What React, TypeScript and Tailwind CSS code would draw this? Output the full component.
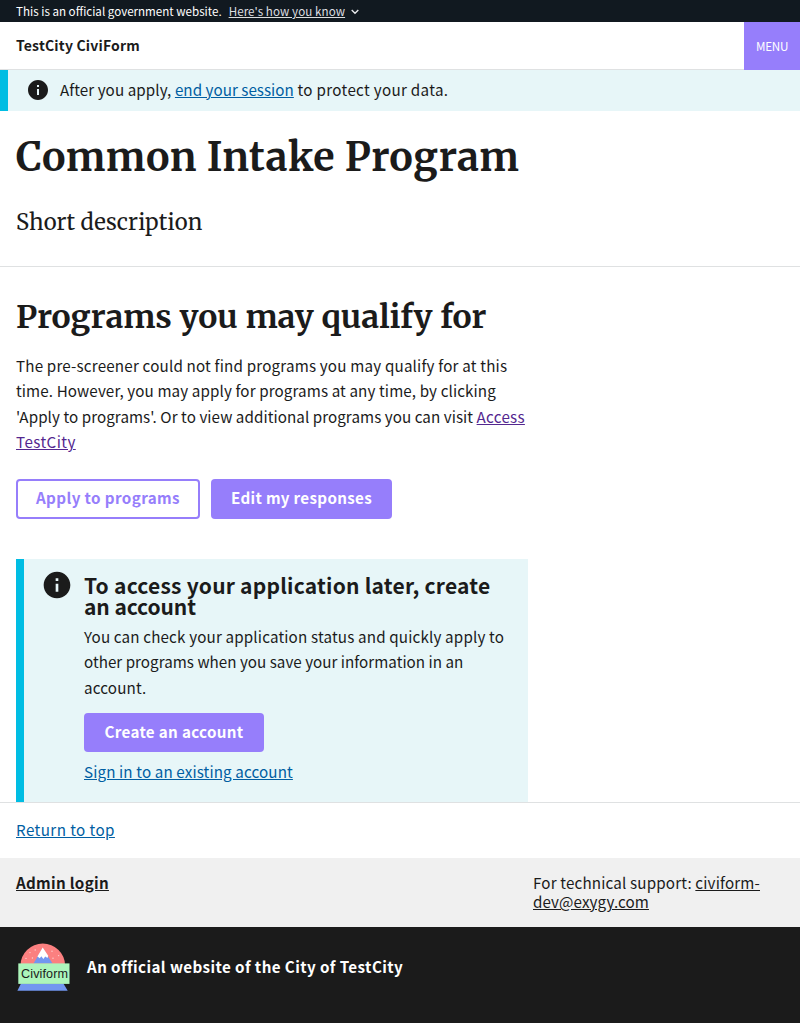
function InfoIcon({ className }: { className: string }) {
  return (
    <svg className={className} viewBox="0 0 24 24" fill="#1b1b1b" aria-hidden="true">
      <path d="M12 2C6.48 2 2 6.48 2 12s4.48 10 10 10 10-4.48 10-10S17.52 2 12 2zm1 15h-2v-6h2v6zm0-8h-2V7h2v2z" />
    </svg>
  );
}

function Logo() {
  return (
    <svg className="block h-12 w-[54px]" viewBox="0 0 54 48" aria-hidden="true">
      <path d="M4.5 22.5a22.3 21.9 0 0 1 44.6 0z" fill="#fb8080" />
      <path d="M17.5 20.5 26.7 5 36.5 20.5z" fill="#7297f0" />
      <path d="M26.7 4.6 21.4 13.4l2.4 1.9 1.5-2 2.1 2.6 1.8-2.4 2.3 1.6.7-2.3z" fill="#fff" />
      <g fill="#fcd0d0">
        <circle cx="14" cy="9.6" r=".7" />
        <circle cx="19.2" cy="7" r=".7" />
        <circle cx="10" cy="15.4" r=".7" />
        <circle cx="16.4" cy="15" r=".7" />
        <circle cx="36" cy="8.2" r=".7" />
        <circle cx="37" cy="15.2" r=".7" />
        <circle cx="42.6" cy="12.6" r=".7" />
      </g>
      <path d="M5 40.5h42.4l4.3 7.2H1.4z" fill="#7297f0" />
      <rect x="2.3" y="20.4" width="51.2" height="20.5" fill="#adf5bb" />
      <text x="5" y="35.4" fontSize="12.6" textLength="47" fontFamily="'Liberation Sans', sans-serif" fill="#1b1b1b">
        Civiform
      </text>
    </svg>
  );
}

const button =
  "flex items-center justify-center rounded-[4px] pb-[2px] text-[15.2px] font-bold leading-none";

export default function App() {
  return (
    <div className="min-h-[1023px] bg-white">
      <div className="w-[800px] whitespace-nowrap font-['Noto_Sans_CJK_SC',sans-serif] text-[15.2px] leading-[25.4px] text-[#1b1b1b]">
        <div className="flex h-[22px] items-center bg-[#111920] px-4 pt-[2px] text-[11.6px] leading-none text-white">
          <span>This is an official government website.</span>
          <a className="ml-[7px] tracking-[0.08px] text-[#dcdee0] underline">Here's how you know</a>
          <svg className="ml-[6px] h-2 w-2" viewBox="0 0 8 8" fill="none" stroke="#e8eaec" strokeWidth="1.4">
            <path d="M.7 2 4 5.3 7.3 2" />
          </svg>
        </div>

        <header className="flex h-12">
          <div className="flex flex-1 items-center border-b border-[#dfe1e2] pl-4 text-[14px] font-bold tracking-[0.19px]">
            TestCity CiviForm
          </div>
          <button className="flex w-14 items-center justify-center bg-[#967efb] text-[11.7px] tracking-[-0.3px] text-white">
            MENU
          </button>
        </header>

        <section className="flex h-[41px] items-center border-l-8 border-[#00bde3] bg-[#e7f6f8] pl-[18px]">
          <InfoIcon className="mb-px h-6 w-6" />
          <p className="mb-[2px] ml-[10px]">
            <span className="tracking-[0.08px]">After you apply, </span>
            <a className="tracking-[0.03px] text-[#005ea2] underline">end your session</a>
            <span className="tracking-[0.31px]"> to protect your data.</span>
          </p>
        </section>

        <section className="h-[156px] border-b border-[#dfe1e2] px-4 pt-[22px]">
          <h1 className="font-['Merriweather','Noto_Serif',serif] text-[39.4px] font-bold leading-[48px] tracking-[0.45px]">
            Common Intake Program
          </h1>
          <p className="mt-[26px] font-['Merriweather','Noto_Serif',serif] text-[22px] leading-[31px] tracking-[0.12px]">
            Short description
          </p>
        </section>

        <main className="h-[535px] px-4 pt-[29px]">
          <h2 className="font-['Merriweather','Noto_Serif',serif] text-[32px] font-bold leading-[42px]">
            Programs you may qualify for
          </h2>
          <p className="mt-[15px] w-[512px]">
            <span className="tracking-[0.18px]">The pre-screener could not find programs you may qualify for at this</span>
            <br />
            <span className="tracking-[0.11px]">time. However, you may apply for programs at any time, by clicking</span>
            <br />
            <span className="tracking-[0.06px]">'Apply to programs'. Or to view additional programs you can visit </span>
            <a className="tracking-[0.28px] text-[#54278f] underline">
              Access
              <br />
              <span className="tracking-[0.42px]">TestCity</span>
            </a>
          </p>
          <div className="mt-[24px] flex gap-[11px]">
            <button className={`${button} h-10 w-[184px] border-2 border-[#967efb] tracking-[0.39px] text-[#967efb]`}>
              Apply to programs
            </button>
            <button className={`${button} h-10 w-[181px] bg-[#967efb] tracking-[0.3px] text-white`}>
              Edit my responses
            </button>
          </div>

          <div className="mt-10 flex h-[243px] w-[512px] border-l-8 border-[#00bde3] bg-[#e7f6f8] pl-[17px] pt-[10px]">
            <InfoIcon className="h-8 w-8 shrink-0" />
            <div className="ml-[11px]">
              <h3 className="mt-[6px] text-[21px] font-bold leading-[21px]">
                <span className="tracking-[0.23px]">To access your application later, create</span>
                <br />
                <span className="tracking-[-0.08px]">an account</span>
              </h3>
              <p className="mt-[7px] leading-[25.5px] tracking-[0.16px]">
                You can check your application status and quickly apply to
                <br />
                <span className="tracking-[0.02px]">other programs when you save your information in an</span>
                <br />
                account.
              </p>
              <button className={`${button} mt-[12.5px] h-[39px] w-[180px] bg-[#967efb] tracking-[0.32px] text-white`}>
                Create an account
              </button>
              <a className="mt-[7px] block tracking-[0.12px] text-[#005ea2] underline">Sign in to an existing account</a>
            </div>
          </div>
        </main>

        <footer>
          <div className="flex h-[56px] items-center border-t border-[#dfe1e2] px-4 pb-[2px]">
            <a className="tracking-[0.42px] text-[#005ea2] underline">Return to top</a>
          </div>
          <div className="flex h-[69px] bg-[#f0f0f0] px-4 pt-[15px] leading-[19px]">
            <a className="w-[517px] font-bold tracking-[0.3px] underline">Admin login</a>
            <p className="tracking-[0.16px]">
              For technical support: <a className="underline">civiform-<br /><span className="tracking-[0.09px]">dev@exygy.com</span></a>
            </p>
          </div>
          <div className="flex h-24 items-start bg-[#1b1b1b] px-4 pt-4">
            <Logo />
            <p className="ml-[17px] mt-[11px] font-bold tracking-[0.4px] text-white">
              An official website of the City of TestCity
            </p>
          </div>
        </footer>
      </div>
    </div>
  );
}
